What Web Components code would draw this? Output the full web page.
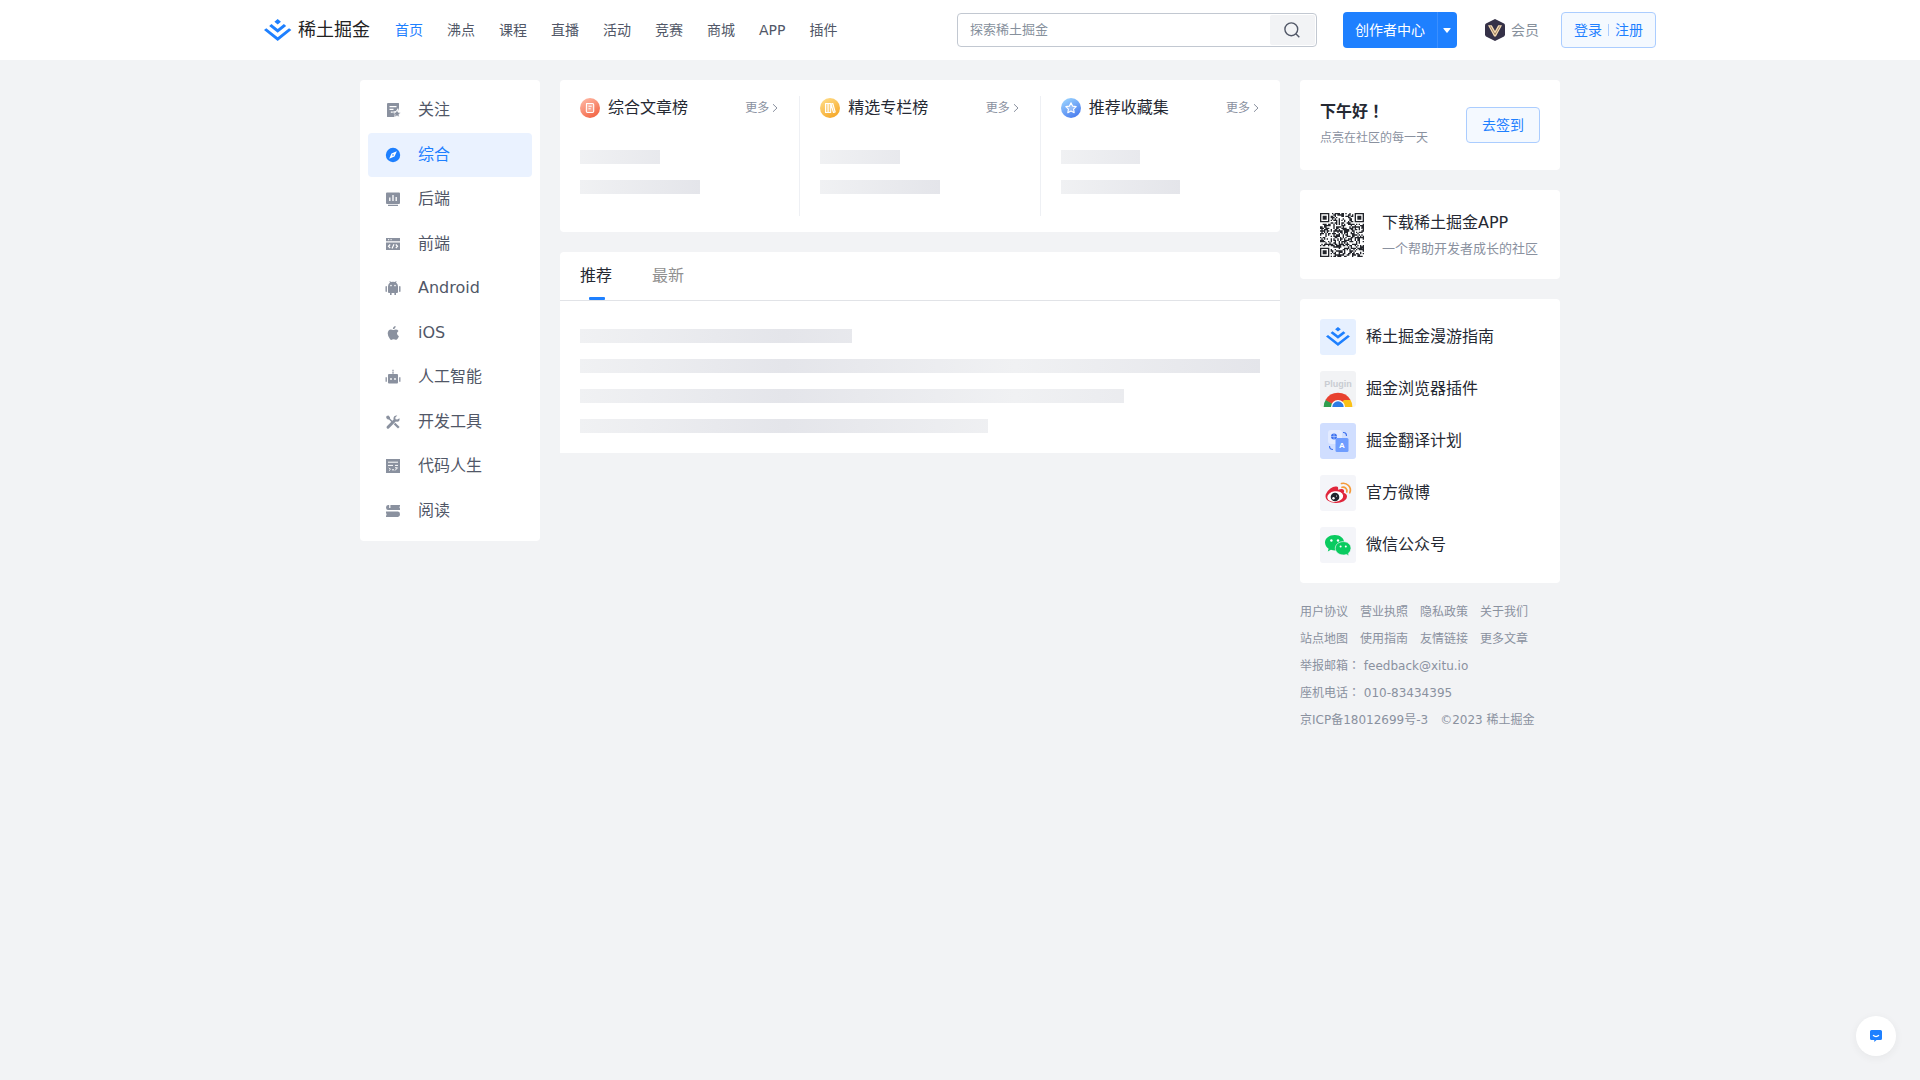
<!DOCTYPE html>
<html lang="zh-CN">
<head>
<meta charset="utf-8">
<meta name="viewport" content="width=device-width, initial-scale=1">
<title>稀土掘金</title>
<style>
  :root { --brand: #1e80ff; --ink: #252933; --ink-2: #515767; --muted: #8a919f; --tint: #f4f9ff; --tint-line: #abcdff; }
  body { margin: 0; min-height: 100vh; background: #f2f3f5; color: var(--ink);
    font-family: "DejaVu Sans", "Noto Sans CJK SC", sans-serif; font-size: 16px; line-height: 24px; }
  .layout { display: flex; align-items: flex-start; gap: 20px; max-width: 1200px; margin: 20px auto; }
  .center { flex: 1; min-width: 0; display: flex; flex-direction: column; gap: 20px; }
  .aside { flex: 0 0 260px; display: flex; flex-direction: column; gap: 20px; }
</style>
</head>
<body>
<site-header>
  <nav-link slot="nav" current>首页</nav-link>
  <nav-link slot="nav">沸点</nav-link>
  <nav-link slot="nav">课程</nav-link>
  <nav-link slot="nav">直播</nav-link>
  <nav-link slot="nav">活动</nav-link>
  <nav-link slot="nav">竞赛</nav-link>
  <nav-link slot="nav">商城</nav-link>
  <nav-link slot="nav">APP</nav-link>
  <nav-link slot="nav">插件</nav-link>
  <search-box slot="tools"></search-box>
  <creator-button slot="tools">创作者中心</creator-button>
  <vip-link slot="tools">会员</vip-link>
  <login-button slot="tools"></login-button>
</site-header>

<main class="layout">
  <side-nav>
    <side-item icon="follow">关注</side-item>
    <side-item icon="compass" current>综合</side-item>
    <side-item icon="backend">后端</side-item>
    <side-item icon="frontend">前端</side-item>
    <side-item icon="android">Android</side-item>
    <side-item icon="apple">iOS</side-item>
    <side-item icon="robot">人工智能</side-item>
    <side-item icon="tools">开发工具</side-item>
    <side-item icon="code">代码人生</side-item>
    <side-item icon="book">阅读</side-item>
  </side-nav>

  <div class="center">
    <rank-panel>
      <rank-column icon="article">综合文章榜</rank-column>
      <rank-column icon="column">精选专栏榜</rank-column>
      <rank-column icon="star">推荐收藏集</rank-column>
    </rank-panel>
    <feed-panel></feed-panel>
  </div>

  <div class="aside">
    <sign-card></sign-card>
    <app-card></app-card>
    <link-card>
      <link-row icon="guide">稀土掘金漫游指南</link-row>
      <link-row icon="chrome">掘金浏览器插件</link-row>
      <link-row icon="translate">掘金翻译计划</link-row>
      <link-row icon="weibo">官方微博</link-row>
      <link-row icon="wechat">微信公众号</link-row>
    </link-card>
    <site-footer></site-footer>
  </div>
</main>
<chat-fab></chat-fab>

<script>
const BASE = `<style>
  *, *::before, *::after { box-sizing: border-box; }
  :host { display: block; box-sizing: border-box; }
  a { color: inherit; text-decoration: none; }
  button, input { font: inherit; color: inherit; margin: 0; padding: 0; border: 0; background: none; }
  button { cursor: pointer; }
  svg { display: block; flex: none; }
  h2, p { margin: 0; font: inherit; }
  .mid { font-family: "Noto Sans CJK TC", sans-serif; line-height: 1; }
</style>`;

function define(name, render, ready) {
  customElements.define(name, class extends HTMLElement {
    connectedCallback() {
      if (this.shadowRoot) return;
      this.attachShadow({ mode: "open" }).innerHTML = BASE + render(this);
      if (ready) ready(this.shadowRoot, this);
    }
  });
}

const MARK = `<path d="M17.59 6.77L21.82 3.41 17.59 0 13.36 3.4zM17.59 17.4L28.52 8.77 25.55 6.39 17.59 12.68 9.62 6.4 6.66 8.78zM17.59 23.29L2.96 11.74 0 14.12 17.59 28 35.18 14.13 32.22 11.75z"/>`;

/* ---------- header ---------- */
define("site-header", () => `<style>
  :host { background: #fff; }
  .bar { display: flex; align-items: center; max-width: 1440px; height: 60px; margin: 0 auto; padding: 0 24px; }
  .logo { display: flex; align-items: center; gap: 6px; margin-right: 13px; font-size: 18px; color: #222; white-space: nowrap; }
  nav { display: flex; font-size: 14px; }
  .tools { display: flex; align-items: center; margin-left: auto; font-size: 14px; }
</style>
<header class="bar">
  <a class="logo" href="#"><svg width="28" height="22" viewBox="0 0 36 28" fill="#1e80ff" aria-hidden="true">${MARK}</svg>稀土掘金</a>
  <nav><slot name="nav"></slot></nav>
  <div class="tools"><slot name="tools"></slot></div>
</header>`);

define("nav-link", () => `<style>
  a { display: block; padding: 0 12px; line-height: 60px; color: var(--ink-2); white-space: nowrap; }
  :host([current]) a { color: var(--brand); }
</style><a href="#"><slot></slot></a>`);

define("search-box", () => `<style>
  :host { margin-right: 26px; }
  form { display: flex; width: 360px; height: 34px; padding: 1px; border: 1px solid #c2c8d1; border-radius: 4px; background: #fff; }
  input { flex: 1; min-width: 0; padding: 0 11px; font-size: 13px; outline: 0; }
  input::placeholder { color: #86909c; opacity: 1; }
  button { display: flex; align-items: center; justify-content: center; width: 45px; padding-right: 2px; background: #f2f3f5; border-radius: 2px; }
</style>
<form role="search"><input type="search" aria-label="搜索" placeholder="探索稀土掘金">
<button type="button" aria-label="搜索"><svg width="18" height="18" viewBox="0 0 18 18" fill="none" stroke="#515767" stroke-width="1.4"><circle cx="8.3" cy="8.3" r="6.4"/><path d="M12.8 12.8l3.5 3.5"/></svg></button></form>`);

define("creator-button", () => `<style>
  :host { display: flex; height: 36px; margin-right: 27px; background: var(--brand); color: #fff; border-radius: 4px; }
  .main { padding: 0 12px; white-space: nowrap; }
  .more { width: 20px; padding-right: 1px; border-left: 1px solid #3b8fff; display: flex; align-items: center; justify-content: center; }
</style><button class="main"><slot></slot></button>
<button class="more" aria-label="展开"><svg width="8" height="5" viewBox="0 0 8 5" fill="#fff"><path d="M.8 0h6.4q.8 0 .3.7L4.5 4.6q-.5.6-1 0L.5.7Q0 0 .8 0z"/></svg></button>`);

define("vip-link", () => `<style>
  :host { margin-right: 22px; }
  a { display: flex; align-items: center; gap: 5px; color: #86909c; white-space: nowrap; }
</style><a href="#"><svg width="22" height="24" viewBox="0 0 22 24" aria-hidden="true">
<path d="M11 1l9 4.6q1 .6 1 1.800v9.200q0 1.200-1 1.800L11 23l-9-4.600q-1-.6-1-1.800V7.400q0-1.200 1-1.800z" fill="#353147"/>
<path d="M4 7.200h3.800L11 13l3.200-5.800H18L11.900 18.600h-1.800z" fill="#f3d9b0"/>
<path d="M6.300 8.300L11 16.500l4.700-8.200" fill="none" stroke="#8d6b4c" stroke-width=".8"/></svg><slot></slot></a>`);

define("login-button", () => `<style>
  button { display: flex; align-items: center; gap: 6px; height: 36px; padding: 0 12px; color: var(--brand); background: var(--tint); border: 1px solid var(--tint-line); border-radius: 4px; white-space: nowrap; }
  i { width: 1px; height: 12px; background: #abcdff; }
</style><button><span>登录</span><i></i><span>注册</span></button>`);

/* ---------- left navigation ---------- */
const SIDE = {
  follow: `<path d="M3 1h10.500q.5 0 .5.500V9l-1-3-2 3-3 .5 2 2.500-.5 3H2.500Q2 15 2 14.500V2q0-1 1-1z"/><path d="M4.500 4.600h7M4.500 7.400h4M5.800 10.200h2" stroke="#fff" stroke-width="1.200"/><path d="M12 8l1.100 2.300 2.500.4-1.800 1.700.4 2.500-2.200-1.200-2.200 1.200.4-2.500-1.800-1.700 2.500-.4z" stroke="#fff" stroke-width=".5"/>`,
  compass: `<circle cx="8" cy="8" r="7.200"/><path d="M11.800 4.200L9.500 9.500 4.200 11.800 6.500 6.500z" fill="#fff"/><circle cx="8" cy="8" r=".8"/>`,
  backend: `<path d="M2 1.500h12q1 0 1 1v9.500q0 1-1 1H2q-1 0-1-1V2.500q0-1 1-1zM3 13.800h10V15H3z"/><path d="M4.800 6.500V10M8 4v6M11.200 6v4" stroke="#fff" stroke-width="1.300"/>`,
  frontend: `<path d="M1 2h14v3.200H1zM1 6.500h14V14H1z"/><path d="M3 3.700h1.200M5.500 3.700h1.200" stroke="#fff"/><path d="M5.200 8.500L3.500 10.300l1.700 1.700M10.800 8.500l1.700 1.800-1.700 1.700M9 8.200l-2 4.200" fill="none" stroke="#fff" stroke-width="1.200"/>`,
  android: `<path d="M3 6.500Q3 3.800 5 2.500L4.400 1.200l.7-.3.700 1.200Q8 1.300 10.200 2.100l.7-1.200.7.300L11 2.500q2 1.300 2 4V12q0 1-1 1h-1v2H9.400v-2H6.600v2H5v-2H4q-1 0-1-1z"/><path d="M1.200 6.800v4.400M14.800 6.800v4.400" stroke="currentColor" stroke-width="1.400" stroke-linecap="round"/><circle cx="6" cy="5.600" r=".8" fill="#fff"/><circle cx="10" cy="5.600" r=".8" fill="#fff"/>`,
  apple: `<path d="M10.600 1q.1 1.300-.7 2.200-.9 1-2 .9-.1-1.200.7-2.100.9-.9 2-1zM8.200 5q.7 0 1.300-.3 2.600-.7 4 1.200-1.600 1-1.500 2.700.1 1.900 1.900 2.600-.7 1.900-1.800 3.100-.9.9-2.100.3-1.400-.6-2.700 0-1.300.7-2.200-.3-2.400-2.700-2.400-6Q3 4.600 6 4.500q.8 0 2.200.5z"/>`,
  robot: `<path d="M8 .8V5" stroke="currentColor" stroke-width="1.200" stroke-dasharray="1.600 .7"/><path d="M4 5h8q1 0 1 1v7.500q0 1-1 1H4q-1 0-1-1V6q0-1 1-1z"/><path d="M1.200 8.200v4.600M14.800 8.200v4.600" stroke="currentColor" stroke-width="1.300"/><circle cx="6" cy="10" r=".9" fill="#fff"/><circle cx="10" cy="10" r=".9" fill="#fff"/>`,
  tools: `<path d="M1.500 2l2-.5L5 3.200v1.300l2.800 2.700-1.100 1.100L4 5.500H2.800L1.200 4z"/><path d="M14.500 4.200q.6 3-2.300 3.600L10.800 7.600 3.800 14.500q-1 .7-1.900-.3-.8-1 0-1.900L8.600 5.500q-.6-2.800 1.700-3.800 1-.4 2-.1l-2 2 .2 1.700 1.800.3z"/><path d="M9.500 9.500l4.300 4.300" stroke="currentColor" stroke-width="2.300"/>`,
  code: `<path d="M1 1h14v14H1z"/><path d="M3 4.200h10M3 7.400h5M10 7.400h3" stroke="#fff" stroke-width="1"/><path d="M4 9.800l1.500 1.500L4 12.600M7 11.800h2M12.500 9.800H10M12.500 9.800L10 12.500" fill="none" stroke="#fff" stroke-width="1"/>`,
  book: `<path d="M3 2h12v1q-1.200 1 0 2.500V7H3Q1 7 1 4.500T3 2z"/><path d="M1 8.500h12q2 0 2 2.700T13 14H1v-1q1.200-1.500 0-3.300z"/><path d="M4.800 2v3" stroke="#fff" stroke-width="1.200"/>`
};
define("side-nav", () => `<style>
  :host { flex: 0 0 180px; }
  nav { display: grid; grid-auto-rows: 1fr; min-height: 461px; padding: 8px; background: #fff; border-radius: 4px; }
</style><nav><slot></slot></nav>`);
define("side-item", el => `<style>
  :host { color: var(--ink-2); }
  a { display: flex; align-items: center; gap: 17px; height: 100%; padding: 0 17px; border-radius: 4px; white-space: nowrap; }
  svg { color: var(--muted); }
  :host([current]) a { background: #eaf2ff; color: var(--brand); }
  :host([current]) svg { color: var(--brand); }
</style><a href="#"><svg width="16" height="16" viewBox="0 0 16 16" fill="currentColor" aria-hidden="true">${SIDE[el.getAttribute("icon")]}</svg><slot></slot></a>`);

/* ---------- skeleton ---------- */
define("skeleton-bar", el => `<style>
  :host { height: 14px; width: ${el.getAttribute("size")}; background: linear-gradient(90deg, #f0f1f3 0, #e4e5ea 30%, #f0f1f3 64%, #e4e5ea 100%) 0 0 / ${el.getAttribute("span") || "680px"} 100%; }
</style>`);

/* ---------- rankings ---------- */
const RANK = {
  article: ["#ffb8a4", "#f2603f", `<path d="M6.500 5.500h6q1.200 0 1.200 1.200v6.600q0 1.200-1.200 1.200h-5q-1.200 0-1.200-1.200zM8.500 8.200h3.200M8.500 10.800h2.200"/>`],
  column: ["#ffdc86", "#f5a524", `<path d="M5.500 5.500h2.600v9H5.500zM8.100 5.500h2.600v9H8.100zM11 6l1.800-.5 2.400 8.500-1.800.5z"/>`],
  star: ["#9ad4ff", "#4678ee", `<path d="M10 4.800l1.600 3.300 3.600.5-2.600 2.500.6 3.600-3.200-1.700-3.200 1.700.6-3.600-2.600-2.500 3.600-.5z"/>`]
};
define("rank-panel", () => `<style>
  :host { display: flex; padding: 16px 0; background: #fff; border-radius: 4px; }
  ::slotted(*) { flex: 1; min-width: 0; }
  ::slotted(:not(:last-child)) { border-right: 1px solid #eef0f4; }
</style><slot></slot>`);
define("rank-column", el => {
  const [from, to, glyph] = RANK[el.getAttribute("icon")];
  return `<style>
  :host { padding: 0 20px 22px; }
  .head { display: flex; align-items: center; margin-bottom: 30px; white-space: nowrap; }
  h2 { margin-left: 8px; flex: 1; }
  a { display: flex; align-items: center; gap: 3px; color: var(--muted); font-size: 12px; line-height: 24px; }
  .bars { display: flex; flex-direction: column; gap: 16px; }
</style>
<div class="head"><svg width="20" height="20" viewBox="0 0 20 20" aria-hidden="true"><defs><linearGradient id="g" x1="0.200" y1="0" x2=".8" y2="1"><stop stop-color="${from}"/><stop offset="1" stop-color="${to}"/></linearGradient></defs><circle cx="10" cy="10" r="10" fill="url(#g)"/><g fill="#fff" fill-opacity=".25" stroke="#fff" stroke-width="1.100" stroke-linejoin="round">${glyph}</g></svg>
<h2><slot></slot></h2><a href="#">更多<svg width="7" height="10" viewBox="0 0 7 10" fill="none" stroke="#8a919f"><path d="M1 1.200L5 5 1 8.800"/></svg></a></div>
<div class="bars"><skeleton-bar size="40%" span="400px"></skeleton-bar><skeleton-bar size="60%" span="400px"></skeleton-bar></div>`;
});

/* ---------- feed ---------- */
define("feed-panel", () => `<style>
  :host { background: #fff; border-radius: 4px 4px 0 0; }
  .tabs { display: flex; gap: 40px; padding: 0 20px; border-bottom: 1px solid #e1e3e7; }
  button { position: relative; height: 48px; color: #909090; }
  button[aria-selected="true"] { color: var(--ink); }
  button[aria-selected="true"]::after { content: ""; position: absolute; left: 50%; bottom: 0; width: 16px; height: 3px; margin-left: -7px; border-radius: 1px; background: var(--brand); }
  .list { display: flex; flex-direction: column; gap: 16px; padding: 28px 20px 20px; }
</style>
<div class="tabs" role="tablist"><button role="tab" aria-selected="true">推荐</button><button role="tab" aria-selected="false">最新</button></div>
<div class="list"><skeleton-bar size="40%"></skeleton-bar><skeleton-bar size="100%"></skeleton-bar><skeleton-bar size="80%"></skeleton-bar><skeleton-bar size="60%"></skeleton-bar></div>`);

/* ---------- right column ---------- */
define("sign-card", () => `<style>
  :host { display: flex; align-items: center; justify-content: space-between; padding: 20px; background: #fff; border-radius: 4px; white-space: nowrap; }
  div { padding-bottom: 2px; }
  h2 { font-weight: 700; line-height: 24px; }
  p { margin-top: 4px; font-size: 12px; line-height: 20px; color: var(--muted); }
  button { height: 36px; padding: 0 15px; font-size: 14px; color: var(--brand); background: var(--tint); border: 1px solid var(--tint-line); border-radius: 4px; }
</style><div><h2>下午好<span class="mid" lang="zh-TW">！</span></h2><p>点亮在社区的每一天</p></div><button>去签到</button>`);

define("app-card", () => `<style>
  a { display: flex; align-items: center; gap: 18px; padding: 18px 20px 17px; background: #fff; border-radius: 4px; white-space: nowrap; }
  .name { padding-top: 2px; line-height: 26px; }
  .desc { font-size: 13px; line-height: 26px; color: var(--muted); }
</style><a href="#"><svg class="qr" width="44" height="44" viewBox="0 0 33 33" role="img" aria-label="二维码"><path fill="#22242a"/></svg>
<div><p class="name">下载稀土掘金APP</p><p class="desc">一个帮助开发者成长的社区</p></div></a>`,
root => {
  const n = 33;
  const finder = (x, y) => {
    for (const [ox, oy] of [[0, 0], [n - 7, 0], [0, n - 7]]) {
      const dx = x - ox, dy = y - oy;
      if (dx < -1 || dy < -1 || dx > 7 || dy > 7) continue;
      const ring = Math.max(Math.abs(dx - 3), Math.abs(dy - 3));
      return ring === 3 || ring <= 1;
    }
    return null;
  };
  let seed = 20230, d = "";
  for (let y = 0; y < n; y++) for (let x = 0; x < n; x++) {
    seed = (seed * 1103515245 + 12345) % 2147483648;
    const f = finder(x, y);
    if (f === null ? seed / 2147483648 < .54 : f) d += `M${x} ${y}h1v1h-1z`;
  }
  root.querySelector(".qr path").setAttribute("d", d);
});

const TILE = {
  guide: ["#e6f0ff", `<g transform="translate(6 8) scale(.68)" fill="#1e80ff">${MARK}</g>`],
  chrome: ["#f2f3f5", `<text x="18" y="15.500" text-anchor="middle" font-family="Liberation Sans" font-weight="700" font-size="9" fill="#c9ccd2">Plugin</text><path d="M18 36L5.900 28.500Q3.500 32 3.700 36z" fill="#2f9e4f"/><path d="M18 36L5.500 29Q9.500 21.700 18 21.700T30.500 29z" fill="#e8412f"/><path d="M18 36l6-7h6.500q2 3 1.900 7z" fill="#fbc116"/><path d="M11 36a7 7 0 0 1 14 0z" fill="#fff"/><path d="M12.300 36a5.700 5.700 0 0 1 11.400 0z" fill="#2d7be5"/>`],
  translate: ["#d0deff", `<rect x="8" y="7" width="14" height="14" rx="3" fill="#e3ebff"/><circle cx="14" cy="13.500" r="3" fill="#3f73ee"/><path d="M11 13.500h6M14 10.500v6" stroke="#b9ceff" stroke-width=".7"/><rect x="15.500" y="15" width="13" height="14" rx="1.500" fill="#6f9dff"/><text x="22" y="25.300" text-anchor="middle" font-family="Liberation Sans" font-weight="700" font-size="8" fill="#fff">A</text><path d="M23 9.500q3.500-.3 3.500 3.500M13 26.500q-3.500 0-3.500-3.500" fill="none" stroke="#3f73ee" stroke-width="1.200"/>`],
  weibo: ["#f4f5f9", `<path d="M16 11.500q2.800-.4 2 3.200 4.600-1.700 5.800.2.700 1-.1 2.900 3.300 1.100 3.300 3.900 0 2.700-3.300 4.600-3.700 2-8.200 1.700-4.700-.2-7.500-2.300-3.200-2.400-2.300-6.300.9-3.200 4.700-6 3.100-2.200 5.600-1.900z" fill="#e0263c"/><ellipse cx="15.200" cy="21.600" rx="8" ry="5.300" transform="rotate(-8 15.200 21.600)" fill="#fff"/><circle cx="15" cy="22" r="4.300" fill="#20262e"/><circle cx="13.500" cy="23.200" r="1.200" fill="#fff"/><circle cx="16.500" cy="21" r=".6" fill="#fff"/><path d="M21.500 8.500q4-1 7 2t1.300 7.300M22 12.300q2.300-.6 3.900 1t.9 3.700" fill="none" stroke="#f59a3a" stroke-width="1.700" stroke-linecap="round"/>`],
  wechat: ["#f4f5f9", `<path d="M14.800 8C9.200 8 5 11.300 5 15.600c0 2.500 1.400 4.700 3.600 6.100L7.800 24.500l3.100-1.700q2 .6 4.400.6 8.500-.6 8.800-7.800C24.100 11.300 20.300 8 14.800 8z" fill="#0acb60"/><path d="M23.300 14.600c-4.600 0-8 2.900-8 6.700s3.400 6.700 8 6.700q1.600 0 3.100-.5l2.700 1.400-.7-2.500q2.600-2 2.600-5.100c0-3.800-3.400-6.700-7.700-6.700z" fill="#0acb60" stroke="#f4f5f9" stroke-width=".7"/><g fill="#fff"><circle cx="11.400" cy="13.500" r="1.200"/><circle cx="18" cy="13.500" r="1.200"/><circle cx="20.600" cy="19.500" r="1"/><circle cx="25.800" cy="19.500" r="1"/></g>`]
};
define("link-card", () => `<style>
  :host { display: flex; flex-direction: column; gap: 16px; padding: 20px; background: #fff; border-radius: 4px; }
</style><slot></slot>`);
define("link-row", el => {
  const [bg, art] = TILE[el.getAttribute("icon")];
  return `<style>
  a { display: flex; align-items: center; gap: 10px; white-space: nowrap; }
  svg { background: ${bg}; border-radius: 3px; }
</style><a href="#"><svg width="36" height="36" viewBox="0 0 36 36">${art}</svg><slot></slot></a>`;
});

define("site-footer", () => `<style>
  footer { display: flex; flex-direction: column; gap: 5px; margin-top: -2px; font-size: 12px; line-height: 22px; color: var(--muted); white-space: nowrap; }
  div { display: flex; gap: 12px; }
</style><footer>
<div><a href="#">用户协议</a><a href="#">营业执照</a><a href="#">隐私政策</a><a href="#">关于我们</a></div>
<div><a href="#">站点地图</a><a href="#">使用指南</a><a href="#">友情链接</a><a href="#">更多文章</a></div>
<p>举报邮箱<span class="mid" lang="zh-TW">：</span> <a href="#">feedback@xitu.io</a></p>
<p>座机电话<span class="mid" lang="zh-TW">：</span> 010-83434395</p>
<div><a href="#">京ICP备18012699号-3</a><span>©2023 稀土掘金</span></div>
</footer>`);

define("chat-fab", () => `<style>
  :host { position: fixed; right: 24px; bottom: 24px; }
  button { display: flex; align-items: center; justify-content: center; width: 40px; height: 40px; border-radius: 50%; background: #fff; box-shadow: 0 2px 8px rgba(50, 50, 50, .06); }
</style><button aria-label="反馈"><svg width="14" height="14" viewBox="0 0 14 14"><path d="M2.500 1h9Q13 1 13 2.500v7q0 1.500-1.500 1.500H7.500L5.300 13V11H2.500Q1 11 1 9.500v-7Q1 1 2.500 1z" fill="#1e80ff"/><path d="M4 6.300q3 2.600 6 0" fill="none" stroke="#fff" stroke-width="1.200"/></svg></button>`);
</script>
</body>
</html>
